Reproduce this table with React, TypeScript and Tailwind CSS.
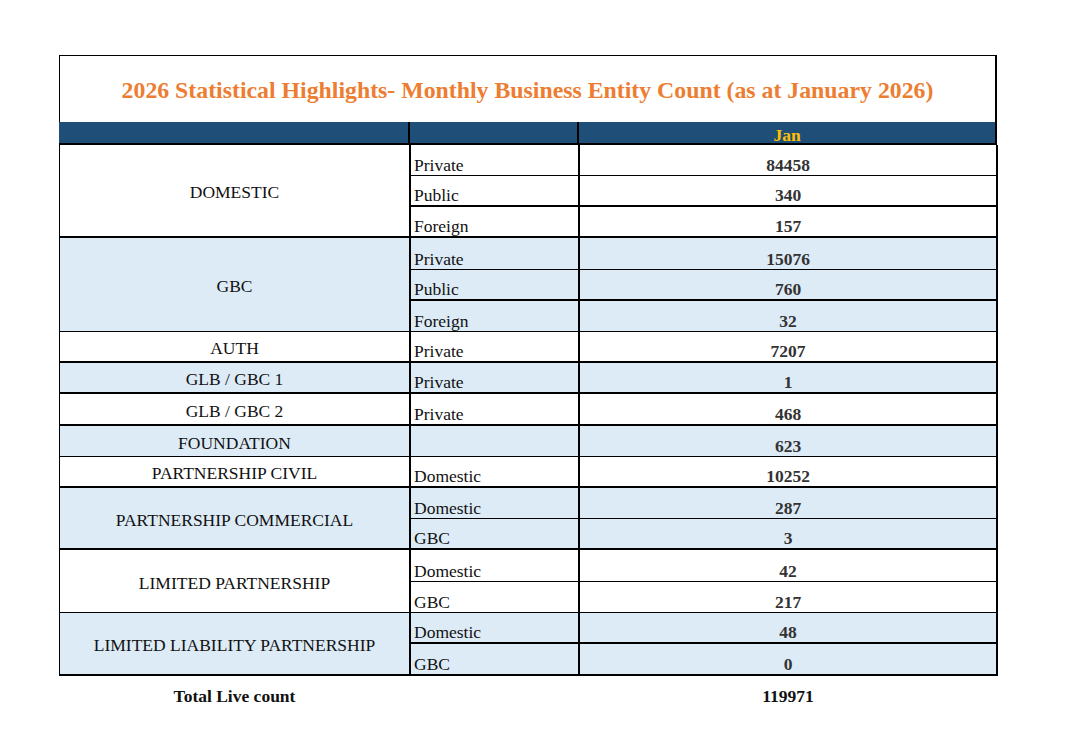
import React from 'react'

type Line = { kind: string; count: string; thick: boolean }
type Group = { label: string; blue: boolean; span: string; lines: Line[] }

const groups: Group[] = [
  {
    label: 'DOMESTIC',
    blue: false,
    span: 'row-span-3',
    lines: [
      { kind: 'Private', count: '84458', thick: false },
      { kind: 'Public', count: '340', thick: true },
      { kind: 'Foreign', count: '157', thick: true },
    ],
  },
  {
    label: 'GBC',
    blue: true,
    span: 'row-span-3',
    lines: [
      { kind: 'Private', count: '15076', thick: false },
      { kind: 'Public', count: '760', thick: true },
      { kind: 'Foreign', count: '32', thick: false },
    ],
  },
  { label: 'AUTH', blue: false, span: 'row-span-1', lines: [{ kind: 'Private', count: '7207', thick: true }] },
  { label: 'GLB / GBC 1', blue: true, span: 'row-span-1', lines: [{ kind: 'Private', count: '1', thick: true }] },
  { label: 'GLB / GBC 2', blue: false, span: 'row-span-1', lines: [{ kind: 'Private', count: '468', thick: true }] },
  { label: 'FOUNDATION', blue: true, span: 'row-span-1', lines: [{ kind: '', count: '623', thick: false }] },
  { label: 'PARTNERSHIP CIVIL', blue: false, span: 'row-span-1', lines: [{ kind: 'Domestic', count: '10252', thick: true }] },
  {
    label: 'PARTNERSHIP COMMERCIAL',
    blue: true,
    span: 'row-span-2',
    lines: [
      { kind: 'Domestic', count: '287', thick: false },
      { kind: 'GBC', count: '3', thick: true },
    ],
  },
  {
    label: 'LIMITED PARTNERSHIP',
    blue: false,
    span: 'row-span-2',
    lines: [
      { kind: 'Domestic', count: '42', thick: false },
      { kind: 'GBC', count: '217', thick: false },
    ],
  },
  {
    label: 'LIMITED LIABILITY PARTNERSHIP',
    blue: true,
    span: 'row-span-2',
    lines: [
      { kind: 'Domestic', count: '48', thick: true },
      { kind: 'GBC', count: '0', thick: true },
    ],
  },
]

export default function App() {
  return (
    <div className="min-h-[756px] bg-white pl-[59px] pt-[55px] font-['Liberation_Serif','Times_New_Roman',serif] text-[17.5px] leading-none text-black">
      <div className="w-[938px]">
        <div className="flex h-[67px] items-center justify-center border-t border-l border-r-2 border-black pt-[4px] text-[23.8px] font-bold text-[#ed7d31]">
          2026 Statistical Highlights- Monthly Business Entity Count (as at January 2026)
        </div>

        <div className="grid h-[23px] grid-cols-[351px_169px_418px] border-b-2 border-black bg-[#1f4e79]">
          <div className="border-r-2 border-black" />
          <div className="border-r-2 border-black" />
          <div className="flex items-center justify-center border-r-2 border-black pt-[5px] font-bold text-[#ffc000]">Jan</div>
        </div>

        <div className="grid grid-cols-[351px_169px_418px] grid-rows-[31px_31px_31px_32px_31px_31px_31px_31px_32px_31px_31px_31px_31px_32px_31px_31px_32px] border-l border-black">
          {groups.map((g) => {
            const bg = g.blue ? 'bg-[#ddebf7]' : 'bg-white'
            const last = g.lines[g.lines.length - 1]
            return (
              <React.Fragment key={g.label}>
                <div
                  className={`${g.span} ${bg} ${last.thick ? 'border-b-2' : 'border-b'} flex items-center justify-center border-r-2 border-black pt-[5px] text-[#111]`}
                >
                  {g.label}
                </div>
                {g.lines.map((l, i) => (
                  <React.Fragment key={i}>
                    <div
                      className={`${bg} ${l.thick ? 'border-b-2' : 'border-b'} flex items-end border-r-2 border-black pb-[1px] pl-[3px] text-[#111]`}
                    >
                      {l.kind}
                    </div>
                    <div
                      className={`${bg} ${l.thick ? 'border-b-2' : 'border-b'} flex items-end justify-center border-r-2 border-black pb-[1px] font-bold text-[#333]`}
                    >
                      {l.count}
                    </div>
                  </React.Fragment>
                ))}
              </React.Fragment>
            )
          })}
        </div>

        <div className="grid h-[40px] grid-cols-[351px_169px_418px] pt-[2px] font-bold text-[#111]">
          <div className="flex items-center justify-center">Total Live count</div>
          <div />
          <div className="flex items-center justify-center">119971</div>
        </div>
      </div>
    </div>
  )
}
